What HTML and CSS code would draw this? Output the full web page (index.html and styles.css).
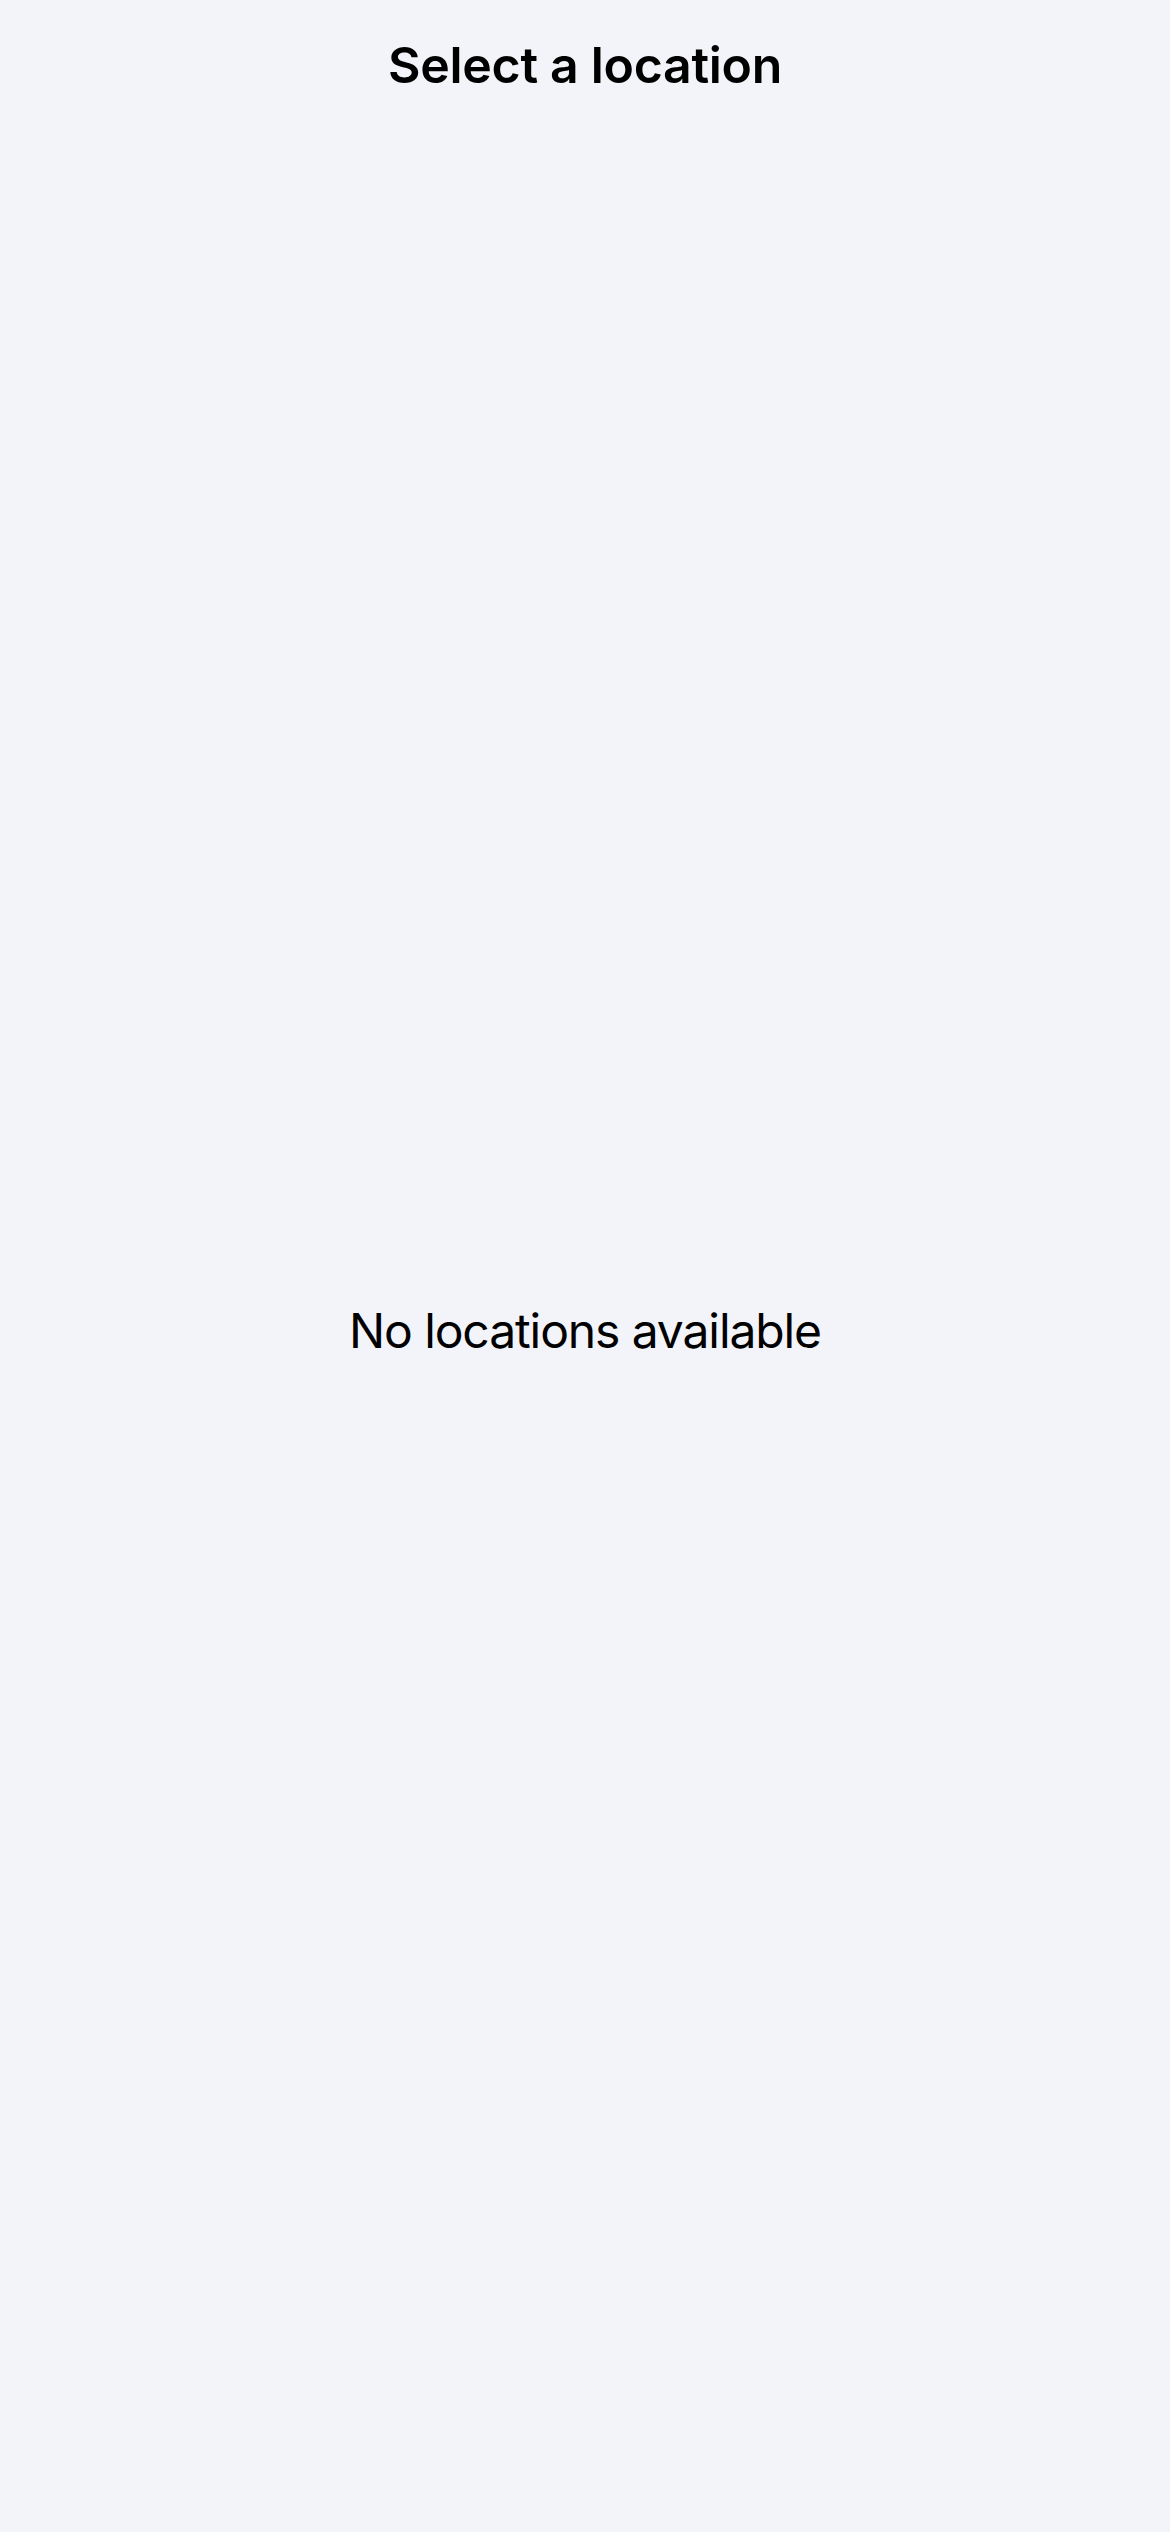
FILE: index.html
```html
<!DOCTYPE html>
<html lang="en">
<head>
<meta charset="utf-8">
<title>Select a location</title>
<link rel="stylesheet" href="styles.css">
</head>
<body>
<div class="screen">
  <header class="header">
    <h1 class="title">Select a location</h1>
  </header>
  <main class="content">
    <p class="empty">No locations available</p>
  </main>
</div>
</body>
</html>
```
FILE: styles.css
```css
html, body {
  margin: 0;
  padding: 0;
  background: #f2f4f9;
}
.screen {
  display: flex;
  flex-direction: column;
  width: 1170px;
  height: 2532px;
  font-family: Inter, "Noto Sans", sans-serif;
  color: #000;
}
.header {
  height: 130px;
  box-sizing: border-box;
  padding-top: 35px;
  display: flex;
  justify-content: center;
}
.title {
  margin: 0;
  font-size: 50px;
  font-weight: 600;
  line-height: 60px;
  letter-spacing: -0.3px;
}
.content {
  flex: 1;
  display: flex;
  align-items: center;
  justify-content: center;
}
.empty {
  margin: 0;
  font-size: 48px;
  font-weight: 400;
  line-height: 58px;
  letter-spacing: -1.1px;
}
```
